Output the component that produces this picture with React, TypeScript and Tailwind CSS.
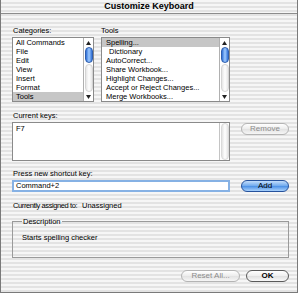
import React from "react";

function Tri({ up }: { up?: boolean }) {
  return (
    <svg width="5" height="4" viewBox="0 0 5 4" className="block">
      {up ? <polygon points="2.5,0 5,4 0,4" fill="#222" /> : <polygon points="0,0 5,0 2.5,4" fill="#222" />}
    </svg>
  );
}

function ListScroll() {
  return (
    <div className="w-[10px] h-full flex flex-col border-l border-[#b0b0b0] bg-white">
      <div className="h-[9px] flex items-center justify-center">
        <Tri up />
      </div>
      <div className="flex-1 flex flex-col items-center">
        <div className="w-[8px] h-[16px] rounded-full border border-[#2f5fae] bg-[linear-gradient(to_right,#2f6fd6,#9fcbff_50%,#2f6fd6)]" />
        <div className="mt-[1px] w-[8px] flex-1 rounded-full border border-[#d4d4d4] bg-[linear-gradient(to_right,#e6e6e6,#ffffff_50%,#e6e6e6)]" />
      </div>
      <div className="h-[9px] flex items-center justify-center">
        <Tri />
      </div>
    </div>
  );
}

function Row({ children, sel, indent, pl }: { children: React.ReactNode; sel?: boolean; indent?: boolean; pl: string }) {
  return (
    <div className={`h-[9px] leading-[9px] whitespace-nowrap ${pl} ${sel ? "bg-[#c6c6c6]" : ""}`}>
      <span className={indent ? "pl-[3px]" : ""}>{children}</span>
    </div>
  );
}

function Btn({ children, kind, w }: { children: React.ReactNode; kind: "disabled" | "blue" | "default"; w: string }) {
  const cls =
    kind === "disabled"
      ? "border-[#b4b4b4] text-[#8c8c8c] bg-[linear-gradient(to_bottom,#ffffff,#ececec_50%,#e2e2e2_51%,#f6f6f6)]"
      : kind === "blue"
      ? "border-[#26529c] text-black bg-[linear-gradient(to_bottom,#c4defb,#6ea9ee_50%,#4a8fe6_51%,#a9d1fb)]"
      : "border-[#5a5a5a] text-black font-bold bg-[linear-gradient(to_bottom,#ffffff,#eeeeee_50%,#e0e0e0_51%,#f8f8f8)]";
  return (
    <div className={`${w} h-[12px] rounded-full border flex items-center justify-center leading-none text-[8px] ${cls}`}>{children}</div>
  );
}

export default function App() {
  return (
    <div className="w-[300px] h-[295px] bg-white font-['Liberation_Sans',Arial,sans-serif] text-[7.5px] text-black">
      <div className="w-[298px] h-[293px] border-x border-b border-[#7a7a7a] bg-[image:repeating-linear-gradient(to_bottom,#f6f6f6_0px,#f6f6f6_2px,#e3e3e3_2px,#e3e3e3_4px)] flex flex-col">
        <div className="h-[14px] border-b border-[#8c8c8c] flex items-center justify-center font-bold text-[9px] leading-none">
          Customize Keyboard
        </div>
        <div className="flex flex-col pl-[11px] pr-[8px]">
          <div className="mt-[12px] h-[9px] leading-[9px] flex whitespace-nowrap">
            <span className="w-[89px] pl-[1px]">Categories:</span>
            <span>Tools</span>
          </div>
          <div className="mt-[2px] flex h-[65px]">
            <div className="w-[82px] h-full border border-[#8a8a8a] bg-white flex">
              <div className="flex-1 flex flex-col">
                <Row pl="pl-[3px]">All Commands</Row>
                <Row pl="pl-[3px]">File</Row>
                <Row pl="pl-[3px]">Edit</Row>
                <Row pl="pl-[3px]">View</Row>
                <Row pl="pl-[3px]">Insert</Row>
                <Row pl="pl-[3px]">Format</Row>
                <Row pl="pl-[3px]" sel>Tools</Row>
              </div>
              <ListScroll />
            </div>
            <div className="ml-[7px] w-[129px] h-full border border-[#8a8a8a] bg-white flex">
              <div className="flex-1 flex flex-col">
                <Row pl="pl-[4px]" sel>Spelling...</Row>
                <Row pl="pl-[4px]" indent>Dictionary</Row>
                <Row pl="pl-[4px]">AutoCorrect...</Row>
                <Row pl="pl-[4px]">Share Workbook...</Row>
                <Row pl="pl-[4px]">Highlight Changes...</Row>
                <Row pl="pl-[4px]">Accept or Reject Changes...</Row>
                <Row pl="pl-[4px]">Merge Workbooks...</Row>
              </div>
              <ListScroll />
            </div>
          </div>

          <div className="mt-[9px] h-[9px] leading-[9px] pl-[1px] whitespace-nowrap">Current keys:</div>
          <div className="mt-[2px] flex items-start">
            <div className="w-[218px] h-[39px] border border-[#8a8a8a] bg-white flex">
              <div className="flex-1 pl-[3px] pt-[1px] leading-[9px]">F7</div>
              <div className="w-[10px] h-full border-l border-[#c4c4c4] bg-white flex justify-center">
                <div className="w-[8px] h-full rounded-full border border-[#dadada] bg-[linear-gradient(to_right,#e4e4e4,#ffffff_50%,#e4e4e4)]" />
              </div>
            </div>
            <div className="ml-[11px] mt-[1px]">
              <Btn kind="disabled" w="w-[48px]">Remove</Btn>
            </div>
          </div>

          <div className="mt-[8px] h-[9px] leading-[9px] pl-[1px] whitespace-nowrap">Press new shortcut key:</div>
          <div className="mt-[2px] flex items-start">
            <div className="w-[218px] h-[12px] border-2 border-[#86b1e4] bg-white flex items-center pl-[2px] leading-none whitespace-nowrap">
              Command+2
            </div>
            <div className="ml-[11px]">
              <Btn kind="blue" w="w-[48px]">Add</Btn>
            </div>
          </div>

          <div className="mt-[9px] h-[9px] leading-[9px] flex whitespace-nowrap">
            <span className="w-[70px] pl-[1px] tracking-[-0.4px]">Currently assigned to:</span>
            <span>Unassigned</span>
          </div>

          <fieldset className="mt-[7px] w-[277px] h-[41px] border border-[#9a9a9a]">
            <legend className="ml-[9px] px-[1px] leading-[9px]">Description</legend>
            <div className="mt-[7px] pl-[9px] leading-[9px] whitespace-nowrap">Starts spelling checker</div>
          </fieldset>

          <div className="mt-[12px] flex justify-end gap-[6px]">
            <Btn kind="disabled" w="w-[59px]">Reset All...</Btn>
            <Btn kind="default" w="w-[43px]">OK</Btn>
          </div>
        </div>
      </div>
    </div>
  );
}
